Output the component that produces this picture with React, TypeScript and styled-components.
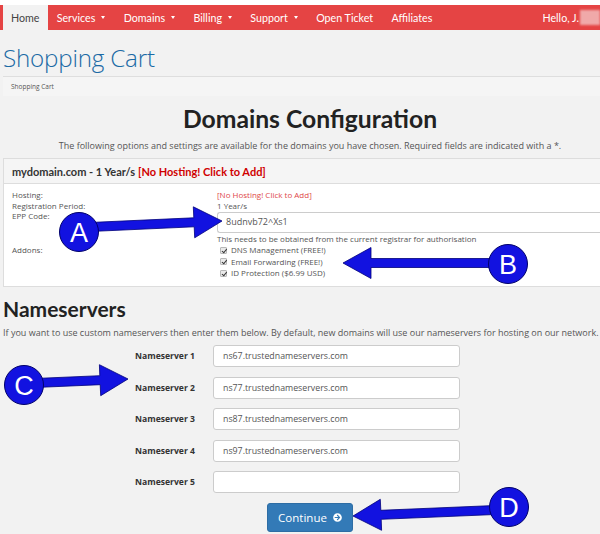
import React from "react";
import styled, { createGlobalStyle } from "styled-components";
import { FaArrowCircleRight } from "react-icons/fa";

const Global = createGlobalStyle`
  html, body { margin: 0; padding: 0; background: #f2f2f2; }
  body { font-family: "Open Sans", "Liberation Sans", sans-serif; color: #333; overflow: hidden; }
  * { box-sizing: border-box; }
`;

const Page = styled.div`
  position: relative;
  width: 600px;
  height: 534px;
  overflow: hidden;
  background: #f2f2f2;
`;

const TopStrip = styled.div`
  height: 5px;
  background: #ffffff;
`;

const Nav = styled.nav`
  display: flex;
  align-items: stretch;
  height: 25px;
  width: 600px;
  padding-left: 3px;
  background: #e54444;
  font-family: "Lato", "Open Sans", sans-serif;
  font-size: 10.7px;
`;

const NavItem = styled.div<{ $active?: boolean; $push?: boolean }>`
  display: flex;
  align-items: center;
  gap: 6px;
  padding: 0 ${(p) => (p.$active ? "8px" : "9.2px")};
  margin-left: ${(p) => (p.$push ? "auto" : "0")};
  background: ${(p) => (p.$active ? "#f2f2f2" : "transparent")};
  color: ${(p) => (p.$active ? "#444" : "#fff")};
  white-space: nowrap;
`;

const UserItem = styled(NavItem)`
  padding-right: 0;
  gap: 1px;
`;

const Caret = styled.span`
  width: 0;
  height: 0;
  border-left: 2.5px solid transparent;
  border-right: 2.5px solid transparent;
  border-top: 3px solid #fff;
`;

const Blurred = styled.span`
  display: inline-block;
  width: 20px;
  height: 15px;
  background: #f0a9a9;
  filter: blur(1px);
`;

const Main = styled.main`
  width: 614px;
  margin-left: 3px;
`;

const PageTitle = styled.h1`
  margin: 13px 0 0;
  font-family: "Open Sans", sans-serif;
  font-weight: 300;
  font-size: 24.2px;
  line-height: 30px;
  color: #1b6aa5;
  letter-spacing: -0.2px;
`;

const Breadcrumb = styled.div`
  margin-top: 3px;
  height: 20px;
  border-top: 1px solid #dedede;
  background: #f5f5f5;
  padding-left: 8px;
  display: flex;
  align-items: center;
  font-size: 6.5px;
  color: #555;
`;

const SectionTitle = styled.h2`
  margin: 8px 0 0;
  text-align: center;
  font-family: "Lato", "Open Sans", sans-serif;
  font-weight: 700;
  font-size: 24.7px;
  line-height: 30px;
  color: #222;
`;

const Lead = styled.p`
  margin: 6px 0 0;
  text-align: center;
  font-size: 9px;
  line-height: 12px;
  color: #555;
`;

const Panel = styled.section`
  margin-top: 6px;
  border: 1px solid #dddddd;
  background: #fff;
`;

const PanelHeader = styled.div`
  height: 25px;
  display: flex;
  align-items: center;
  padding-left: 8px;
  background: #f5f5f5;
  border-bottom: 1px solid #dddddd;
  font-family: "Lato", "Open Sans", sans-serif;
  font-weight: 700;
  font-size: 11px;
  color: #333;
`;

const RedBold = styled.span`
  color: #d00000;
  margin-left: 3px;
`;

const PanelBody = styled.div`
  display: grid;
  grid-template-columns: 205px 1fr;
  padding: 6px 0 7px 8px;
  font-size: 8px;
  line-height: 10.5px;
  color: #555;
`;

const Label = styled.div``;

const Value = styled.div<{ $red?: boolean }>`
  color: ${(p) => (p.$red ? "#e04848" : "#555")};
`;

const EppInput = styled.div`
  height: 21px;
  border: 1px solid #cccccc;
  border-right: none;
  border-radius: 3px 0 0 3px;
  background: #fff;
  display: flex;
  align-items: center;
  padding-left: 8px;
  font-size: 9px;
  color: #555;
  margin-top: 0.5px;
  margin-bottom: 1.5px;
`;

const AddonList = styled.div`
  display: flex;
  flex-direction: column;
`;

const Addon = styled.div`
  display: flex;
  align-items: center;
  gap: 4px;
  height: 11.5px;
  padding-left: 3px;
`;

const Check = styled.span`
  position: relative;
  width: 7px;
  height: 7px;
  border: 1px solid #b8b8b8;
  border-radius: 1px;
  background: #e9e9e9;
  &::after {
    content: "";
    position: absolute;
    left: 1.5px;
    top: 0px;
    width: 2px;
    height: 3.5px;
    border-right: 1.2px solid #333;
    border-bottom: 1.2px solid #333;
    transform: rotate(40deg);
  }
`;

const SubHeading = styled.h3`
  margin: 10px 0 0;
  font-family: "Lato", "Open Sans", sans-serif;
  font-weight: 700;
  font-size: 21px;
  line-height: 24px;
  color: #222;
`;

const Para = styled.p`
  margin: 6px 0 0;
  font-size: 9px;
  line-height: 12px;
  color: #555;
  white-space: nowrap;
`;

const NsForm = styled.div`
  margin-top: 6px;
  display: grid;
  grid-template-columns: 192px 247px;
  column-gap: 18px;
  row-gap: 9.5px;
  align-items: center;
`;

const NsLabel = styled.div`
  text-align: right;
  font-weight: 700;
  font-size: 8.6px;
  color: #333;
`;

const NsInput = styled.div`
  height: 22px;
  border: 1px solid #cccccc;
  border-radius: 3px;
  background: #fff;
  display: flex;
  align-items: center;
  padding-left: 9px;
  font-size: 8.8px;
  color: #555;
`;

const ButtonRow = styled.div`
  display: flex;
  justify-content: center;
  margin-top: 10px;
`;

const ContinueButton = styled.button`
  display: flex;
  align-items: center;
  gap: 6px;
  height: 29px;
  padding: 0 10px;
  border: 1px solid #2e6da4;
  border-radius: 3px;
  background: #337ab7;
  color: #fff;
  font-family: "Open Sans", sans-serif;
  font-size: 11.5px;
  cursor: pointer;
`;

const Overlay = styled.svg`
  position: absolute;
  left: 0;
  top: 0;
  pointer-events: none;
`;

function arrowPoints(x1: number, y1: number, x2: number, y2: number, sw = 9, hw = 31, hl = 28) {
  const dx = x2 - x1;
  const dy = y2 - y1;
  const L = Math.hypot(dx, dy);
  const ux = dx / L;
  const uy = dy / L;
  const nx = -uy;
  const ny = ux;
  const bx = x2 - ux * hl;
  const by = y2 - uy * hl;
  const pts = [
    [x1 + (nx * sw) / 2, y1 + (ny * sw) / 2],
    [bx + (nx * sw) / 2, by + (ny * sw) / 2],
    [bx + (nx * hw) / 2, by + (ny * hw) / 2],
    [x2, y2],
    [bx - (nx * hw) / 2, by - (ny * hw) / 2],
    [bx - (nx * sw) / 2, by - (ny * sw) / 2],
    [x1 - (nx * sw) / 2, y1 - (ny * sw) / 2],
  ];
  return pts.map((p) => p.map((v) => v.toFixed(1)).join(",")).join(" ");
}

type Callout = { letter: string; cx: number; cy: number; from: [number, number]; to: [number, number] };

const callouts: Callout[] = [
  { letter: "A", cx: 79, cy: 232, from: [90, 227], to: [222, 221] },
  { letter: "B", cx: 508, cy: 264, from: [495, 263], to: [343, 263] },
  { letter: "C", cx: 24, cy: 385, from: [35, 383], to: [128, 379] },
  { letter: "D", cx: 509, cy: 507, from: [495, 510], to: [353, 516] },
];

const nameservers = [
  "ns67.trustednameservers.com",
  "ns77.trustednameservers.com",
  "ns87.trustednameservers.com",
  "ns97.trustednameservers.com",
  "",
];

export default function App() {
  return (
    <Page>
      <Global />
      <TopStrip />
      <Nav>
        <NavItem $active>Home</NavItem>
        <NavItem>Services <Caret /></NavItem>
        <NavItem>Domains <Caret /></NavItem>
        <NavItem>Billing <Caret /></NavItem>
        <NavItem>Support <Caret /></NavItem>
        <NavItem>Open Ticket</NavItem>
        <NavItem>Affiliates</NavItem>
        <UserItem $push>Hello, J. <Blurred /></UserItem>
      </Nav>
      <Main>
        <PageTitle>Shopping Cart</PageTitle>
        <Breadcrumb>Shopping Cart</Breadcrumb>
        <SectionTitle>Domains Configuration</SectionTitle>
        <Lead>
          The following options and settings are available for the domains you have chosen. Required fields are
          indicated with a *.
        </Lead>
        <Panel>
          <PanelHeader>
            mydomain.com - 1 Year/s <RedBold>[No Hosting! Click to Add]</RedBold>
          </PanelHeader>
          <PanelBody>
            <Label>Hosting:</Label>
            <Value $red>[No Hosting! Click to Add]</Value>
            <Label>Registration Period:</Label>
            <Value>1 Year/s</Value>
            <Label>EPP Code:</Label>
            <Value>
              <EppInput>8udnvb72^Xs1</EppInput>
              This needs to be obtained from the current registrar for authorisation
            </Value>
            <Label>Addons:</Label>
            <AddonList>
              <Addon><Check />DNS Management (FREE!)</Addon>
              <Addon><Check />Email Forwarding (FREE!)</Addon>
              <Addon><Check />ID Protection ($6.99 USD)</Addon>
            </AddonList>
          </PanelBody>
        </Panel>
        <SubHeading>Nameservers</SubHeading>
        <Para>
          If you want to use custom nameservers then enter them below. By default, new domains will use our
          nameservers for hosting on our network.
        </Para>
        <NsForm>
          {nameservers.map((ns, i) => (
            <React.Fragment key={i}>
              <NsLabel>Nameserver {i + 1}</NsLabel>
              <NsInput>{ns}</NsInput>
            </React.Fragment>
          ))}
        </NsForm>
        <ButtonRow>
          <ContinueButton>
            Continue <FaArrowCircleRight size={9} />
          </ContinueButton>
        </ButtonRow>
      </Main>
      <Overlay width={600} height={534} viewBox="0 0 600 534">
        {callouts.map((c) => (
          <g key={c.letter}>
            <polygon
              points={arrowPoints(c.from[0], c.from[1], c.to[0], c.to[1])}
              fill="#1212e0"
              stroke="#00007a"
              strokeWidth={0.8}
              strokeLinejoin="round"
            />
            <circle cx={c.cx} cy={c.cy} r={19.5} fill="#1212e0" stroke="#00006a" strokeWidth={1} />
            <text
              x={c.cx}
              y={c.cy + 9.5}
              textAnchor="middle"
              fill="#ffffff"
              fontFamily="'Liberation Sans', Arial, sans-serif"
              fontSize={27}
            >
              {c.letter}
            </text>
          </g>
        ))}
      </Overlay>
    </Page>
  );
}
